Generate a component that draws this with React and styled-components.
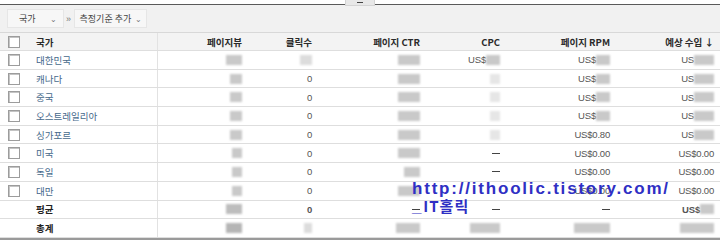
import React from "react";
import styled, { createGlobalStyle } from "styled-components";

const GlobalStyle = createGlobalStyle`
  html, body {
    margin: 0;
    padding: 0;
    background: #ffffff;
  }
  body {
    font-family: "Liberation Sans", "Noto Sans CJK KR", Arial, sans-serif;
    font-size: 10px;
    color: #333;
  }
`;

const cols = "30px 128px 90px 70px 108px 80px 110px 104px";

const rows = [
  { name: "대한민국", views: 16, clicks: "blur", ctr: 22, cpc: "usblur", rpm: "usblur", rev: "usblur" },
  { name: "캐나다", views: 12, clicks: "0", ctr: 22, cpc: "faint", rpm: "usblur", rev: "usblur" },
  { name: "중국", views: 12, clicks: "0", ctr: 22, cpc: "faint", rpm: "usblur", rev: "usblur" },
  { name: "오스트레일리아", views: 12, clicks: "0", ctr: 22, cpc: "faint", rpm: "usblur", rev: "usblur" },
  { name: "싱가포르", views: 12, clicks: "0", ctr: 22, cpc: "faint", rpm: "US$0.80", rev: "usblur" },
  { name: "미국", views: 10, clicks: "0", ctr: 22, cpc: "—", rpm: "US$0.00", rev: "US$0.00" },
  { name: "독일", views: 10, clicks: "0", ctr: 16, cpc: "—", rpm: "US$0.00", rev: "US$0.00" },
  { name: "대만", views: 10, clicks: "0", ctr: 22, cpc: "", rpm: "US$0.00", rev: "US$0.00" },
];

const TopEdge = styled.div`
  height: 5px;
  border-bottom: 1px solid #5a5a5a;
  box-sizing: border-box;
  display: flex;
  justify-content: center;
  align-items: flex-start;
`;

const Grip = styled.div`
  width: 30px;
  height: 6px;
  background: #e8e8e8;
  border: 1px solid #d4d4d4;
  border-top: none;
  box-sizing: border-box;
  display: flex;
  justify-content: center;
  align-items: center;
  &::after {
    content: "";
    width: 6px;
    height: 1px;
    background: #444;
  }
`;

const Toolbar = styled.div`
  height: 28px;
  background: #f1f1f1;
  border-bottom: 1px solid #d8d8d8;
  box-sizing: border-box;
  display: flex;
  align-items: center;
  padding-left: 7px;
`;

const DropButton = styled.div`
  height: 19px;
  padding: 0 ${(p) => p.$pad}px 0 ${(p) => p.$padLeft}px;
  background: #f7f7f7;
  border: 1px solid #e6e6e6;
  box-sizing: border-box;
  display: flex;
  align-items: center;
  gap: ${(p) => p.$gap}px;
  font-size: 9px;
  color: #444;
  font-family: "Noto Sans CJK KR", sans-serif;
`;

const Caret = styled.span`
  font-size: 8px;
  color: #777;
`;

const Chevron = styled.span`
  width: 10px;
  text-align: center;
  font-size: 9px;
  color: #777;
`;

const Table = styled.div`
  border-bottom: 2px solid #9a9a9a;
`;

const Row = styled.div`
  display: grid;
  grid-template-columns: ${cols};
  height: ${(p) => (p.$head ? 18 : 18.7)}px;
  box-sizing: border-box;
  border-bottom: 1px solid #dedede;
  background: ${(p) => (p.$head ? "#f3f3f3" : "#ffffff")};
  font-weight: ${(p) => (p.$bold ? 700 : 400)};
`;

const Cell = styled.div`
  display: flex;
  align-items: center;
  justify-content: ${(p) => (p.$left ? "flex-start" : "flex-end")};
  padding: ${(p) => (p.$left ? "0 0 0 6px" : "0 6px 0 0")};
  font-size: 9.5px;
  font-family: "Noto Sans CJK KR", "Liberation Sans", sans-serif;
  color: #333;
  white-space: nowrap;
  border-right: ${(p) => (p.$divider ? "1px solid #e2e2e2" : "none")};
  overflow: hidden;
`;

const HeadCell = styled(Cell)`
  font-weight: 700;
  color: #2a2a2a;
`;

const Name = styled.span`
  color: ${(p) => (p.$plain ? "#222" : "#46698b")};
  font-weight: ${(p) => (p.$plain ? 700 : 400)};
`;

const CheckCell = styled.div`
  display: flex;
  align-items: center;
  padding-left: 8px;
`;

const Check = styled.span`
  width: 12px;
  height: 12px;
  box-sizing: border-box;
  border: 1px solid #9c9c9c;
  background: #fff;
  box-shadow: inset 1px 1px 0 #c4c4c4;
`;

const Money = styled.span`
  font-family: "Liberation Sans", Arial, sans-serif;
  font-size: 9.5px;
  color: #555;
  letter-spacing: -0.2px;
`;

const Blur = styled.span`
  display: inline-block;
  width: ${(p) => p.$w}px;
  height: ${(p) => p.$h || 10}px;
  background: ${(p) => p.$c || "#c9c9c9"};
  filter: blur(1.2px);
`;

const Dash = styled.span`
  display: inline-block;
  width: 8px;
  height: 1px;
  background: #444;
`;

// blog watermark stamped over the table
const Watermark = styled.div`
  position: absolute;
  left: 412px;
  top: 180px;
  font-family: "Liberation Sans", Arial, sans-serif;
  font-weight: 700;
  font-size: 17px;
  letter-spacing: 1.8px;
  line-height: 17px;
  color: #2f2fc4;
  pointer-events: none;
`;

const WatermarkKo = styled.span`
  font-family: "Noto Sans CJK KR", sans-serif;
  font-weight: 700;
  font-size: 15px;
  letter-spacing: 1px;
`;

const Page = styled.div`
  position: relative;
  width: 720px;
  height: 241px;
  overflow: hidden;
`;

function Value({ v, us }) {
  if (v === "blur") return <Blur $w={12} $c="#dcdcdc" />;
  if (v === "faint") return <Blur $w={10} $c="#e6e6e6" />;
  if (v === "usblur")
    return (
      <>
        <Money>{us || "US$"}</Money>
        <Blur $w={us ? 20 : 14} />
      </>
    );
  if (v === "—") return <Dash />;
  if (typeof v === "number") return <Blur $w={v} />;
  return <Money>{v}</Money>;
}

export default function App() {
  return (
    <Page>
      <GlobalStyle />
      <TopEdge>
        <Grip />
      </TopEdge>
      <Toolbar>
        <DropButton $padLeft={11} $pad={6} $gap={14}>
          국가 <Caret>⌄</Caret>
        </DropButton>
        <Chevron>»</Chevron>
        <DropButton $padLeft={5} $pad={4} $gap={4}>
          측정기준 추가 <Caret>⌄</Caret>
        </DropButton>
      </Toolbar>
      <Table>
        <Row $head>
          <CheckCell>
            <Check />
          </CheckCell>
          <HeadCell $left $divider>
            국가
          </HeadCell>
          <HeadCell>페이지뷰</HeadCell>
          <HeadCell>클릭수</HeadCell>
          <HeadCell>페이지 CTR</HeadCell>
          <HeadCell>CPC</HeadCell>
          <HeadCell>페이지 RPM</HeadCell>
          <HeadCell>예상 수입 ↓</HeadCell>
        </Row>
        {rows.map((r) => (
          <Row key={r.name}>
            <CheckCell>
              <Check />
            </CheckCell>
            <Cell $left $divider>
              <Name>{r.name}</Name>
            </Cell>
            <Cell>
              <Value v={r.views} />
            </Cell>
            <Cell>
              <Value v={r.clicks} />
            </Cell>
            <Cell>
              <Value v={r.ctr} />
            </Cell>
            <Cell>{r.cpc && <Value v={r.cpc} />}</Cell>
            <Cell>
              <Value v={r.rpm} />
            </Cell>
            <Cell>
              <Value v={r.rev} us={r.rev === "usblur" ? "US" : undefined} />
            </Cell>
          </Row>
        ))}
        <Row $bold>
          <CheckCell />
          <Cell $left $divider>
            <Name $plain>평균</Name>
          </Cell>
          <Cell>
            <Blur $w={16} $c="#bdbdbd" />
          </Cell>
          <Cell>
            <Money>0</Money>
          </Cell>
          <Cell>
            <Dash />
          </Cell>
          <Cell>
            <Dash />
          </Cell>
          <Cell>
            <Dash />
          </Cell>
          <Cell>
            <Money>US$</Money>
            <Blur $w={14} />
          </Cell>
        </Row>
        <Row $bold>
          <CheckCell />
          <Cell $left $divider>
            <Name $plain>총계</Name>
          </Cell>
          <Cell>
            <Blur $w={16} $c="#b5b5b5" />
          </Cell>
          <Cell>
            <Blur $w={8} $c="#dcdcdc" />
          </Cell>
          <Cell>
            <Blur $w={24} />
          </Cell>
          <Cell>
            <Blur $w={30} />
          </Cell>
          <Cell>
            <Blur $w={36} />
          </Cell>
          <Cell>
            <Blur $w={34} />
          </Cell>
        </Row>
      </Table>
      <Watermark>
        http://ithoolic.tistory.com/
        <br />_<WatermarkKo>IT홀릭</WatermarkKo>
      </Watermark>
    </Page>
  );
}
